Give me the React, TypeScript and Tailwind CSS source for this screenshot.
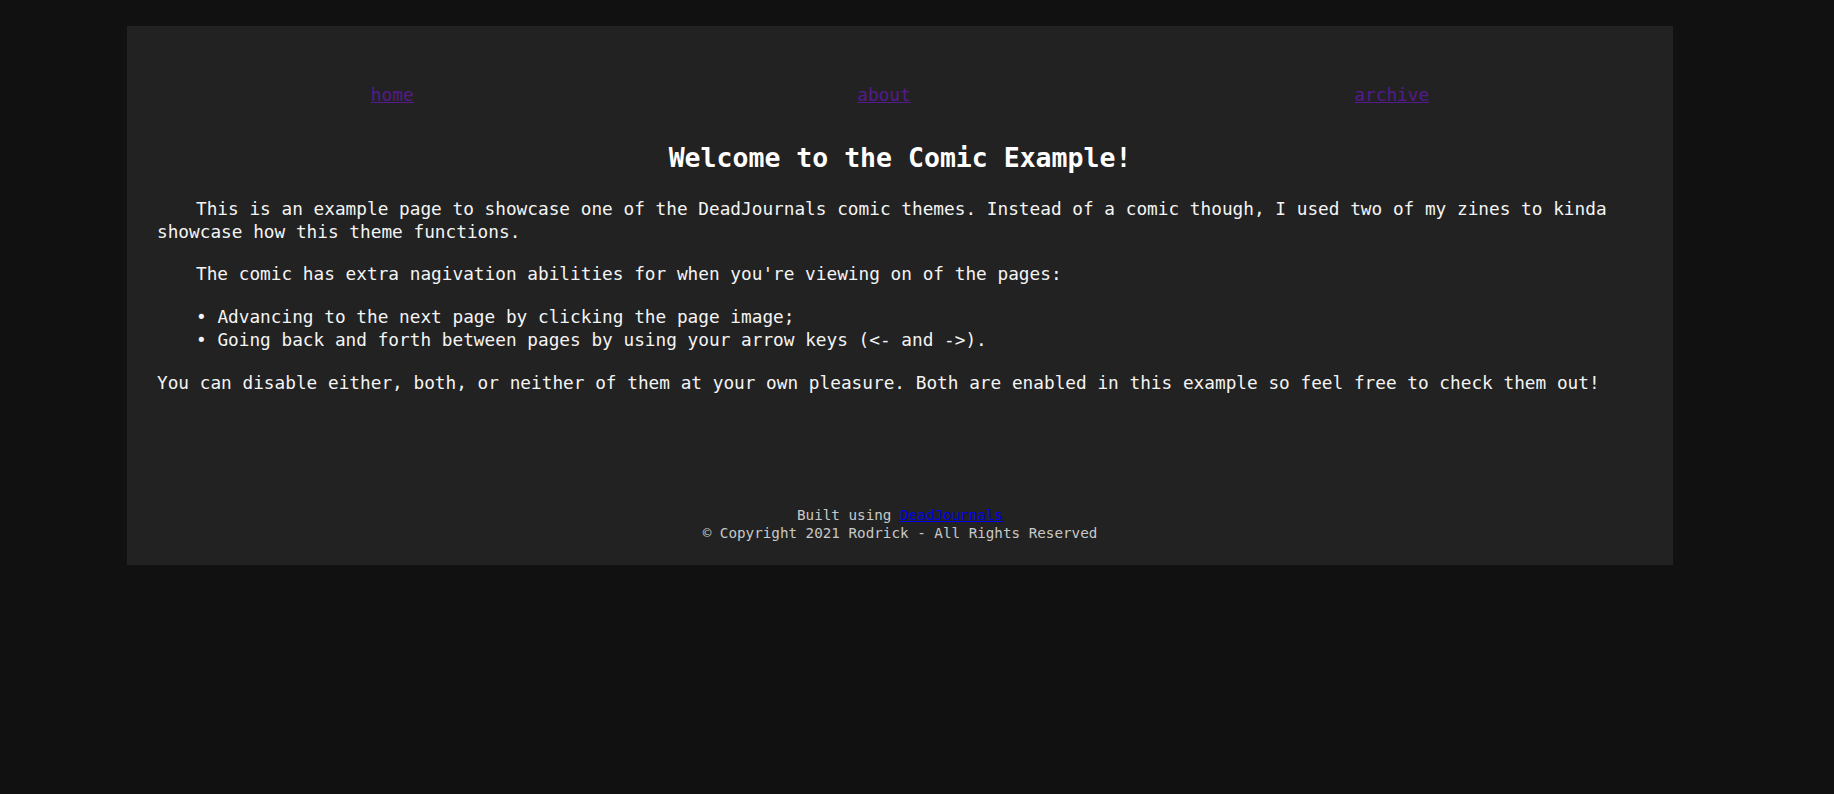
const links = [
  { href: "#home", label: "home" },
  { href: "#about", label: "about" },
  { href: "#archive", label: "archive" },
];

const features = [
  "Advancing to the next page by clicking the page image;",
  "Going back and forth between pages by using your arrow keys (<- and ->).",
];

export default function App() {
  return (
    <div className="min-h-[794px] bg-[#111111] pt-[26px] font-['DejaVu_Sans_Mono',monospace]">
      <div className="ml-[127px] w-[1546px] bg-[#222222] px-[30px] pb-[23px] pt-[58px] text-white">
        <nav className="-mx-[8px] flex justify-around text-[17.75px] leading-[23px]">
          {links.map((link) => (
            <a key={link.href} href={link.href} className="text-[#551a8b] underline">
              {link.label}
            </a>
          ))}
        </nav>

        <h1 className="mt-[34px] text-center text-[26.5px] font-bold leading-[34px]">
          Welcome to the Comic Example!
        </h1>

        <div className="mt-[23px] text-[17.75px] leading-[23px] text-[#f4f4f4]">
          <p className="indent-[39px]">
            This is an example page to showcase one of the DeadJournals comic themes. Instead of a
            comic though, I used two of my zines to kinda showcase how this theme functions.
          </p>
          <p className="mt-[19px] indent-[39px]">
            The comic has extra nagivation abilities for when you're viewing on of the pages:
          </p>
          <ul className="mt-[20px]">
            {features.map((item) => (
              <li key={item} className="pl-[39px]">
                • {item}
              </li>
            ))}
          </ul>
          <p className="mt-[20px]">
            You can disable either, both, or neither of them at your own pleasure. Both are enabled in
            this example so feel free to check them out!
          </p>
        </div>

        <footer className="mt-[111px] text-center text-[14.25px] leading-[18px] text-[#c8c8c8]">
          <div>
            Built using{" "}
            <a href="#deadjournals" className="text-[#0000ee] underline">
              DeadJournals
            </a>
          </div>
          <div>© Copyright 2021 Rodrick - All Rights Reserved</div>
        </footer>
      </div>
    </div>
  );
}
